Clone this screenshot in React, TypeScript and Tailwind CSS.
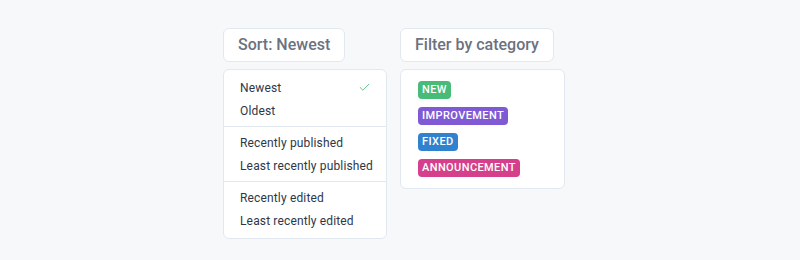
import React from 'react';

const sortGroups = [
  ['Newest', 'Oldest'],
  ['Recently published', 'Least recently published'],
  ['Recently edited', 'Least recently edited'],
];

const categories = [
  { label: 'NEW', className: 'bg-[#48bb78]' },
  { label: 'IMPROVEMENT', className: 'bg-[#805ad5]' },
  { label: 'FIXED', className: 'bg-[#3182ce]' },
  { label: 'ANNOUNCEMENT', className: 'bg-[#d53f8c]' },
];

const CheckIcon = () => (
  <svg width="13" height="13" viewBox="0 0 24 24" fill="none" stroke="#48bb78" strokeWidth="1.6" strokeLinecap="round" strokeLinejoin="round">
    <polyline points="20 6 9 17 4 12" />
  </svg>
);

const App: React.FC = () => {
  const selected = 'Newest';

  return (
    <div className="w-[800px] h-[260px] bg-[#f7f8fa] font-['Roboto',sans-serif]">
      <div className="flex items-start gap-[13px] pl-[223px] pt-[28px]">
        {/* Sort dropdown */}
        <div className="flex flex-col items-start gap-[7px]">
          <button className="h-[34px] px-[14px] bg-white border border-[#e2e8f0] rounded-md text-[16px] font-medium text-[#6b7280]">
            Sort: Newest
          </button>
          <div className="w-[164px] bg-white border border-[#e2e8f0] rounded-md py-[2px]">
            {sortGroups.map((group, i) => (
              <div key={i} className={`py-[4px] ${i > 0 ? 'border-t border-[#e2e8f0]' : ''}`}>
                {group.map(item => (
                  <div key={item} className="h-[23px] pl-[16px] pr-[15px] flex items-center justify-between whitespace-nowrap text-[12px] tracking-[0.15px] text-[#2d3748]">
                    <span>{item}</span>
                    {item === selected && <CheckIcon />}
                  </div>
                ))}
              </div>
            ))}
          </div>
        </div>

        {/* Category filter */}
        <div className="flex flex-col items-start gap-[7px]">
          <button className="h-[34px] px-[14px] bg-white border border-[#e2e8f0] rounded-md text-[16px] font-medium text-[#6b7280]">
            Filter by category
          </button>
          <div className="w-[165px] bg-white border border-[#e2e8f0] rounded-md px-[17px] py-[11px] flex flex-col items-start gap-[8px]">
            {categories.map(cat => (
              <span
                key={cat.label}
                className={`h-[18px] px-[4px] flex items-center rounded-sm text-[11px] font-medium tracking-[0.4px] text-white ${cat.className}`}
              >
                {cat.label}
              </span>
            ))}
          </div>
        </div>
      </div>
    </div>
  );
};

export default App;
